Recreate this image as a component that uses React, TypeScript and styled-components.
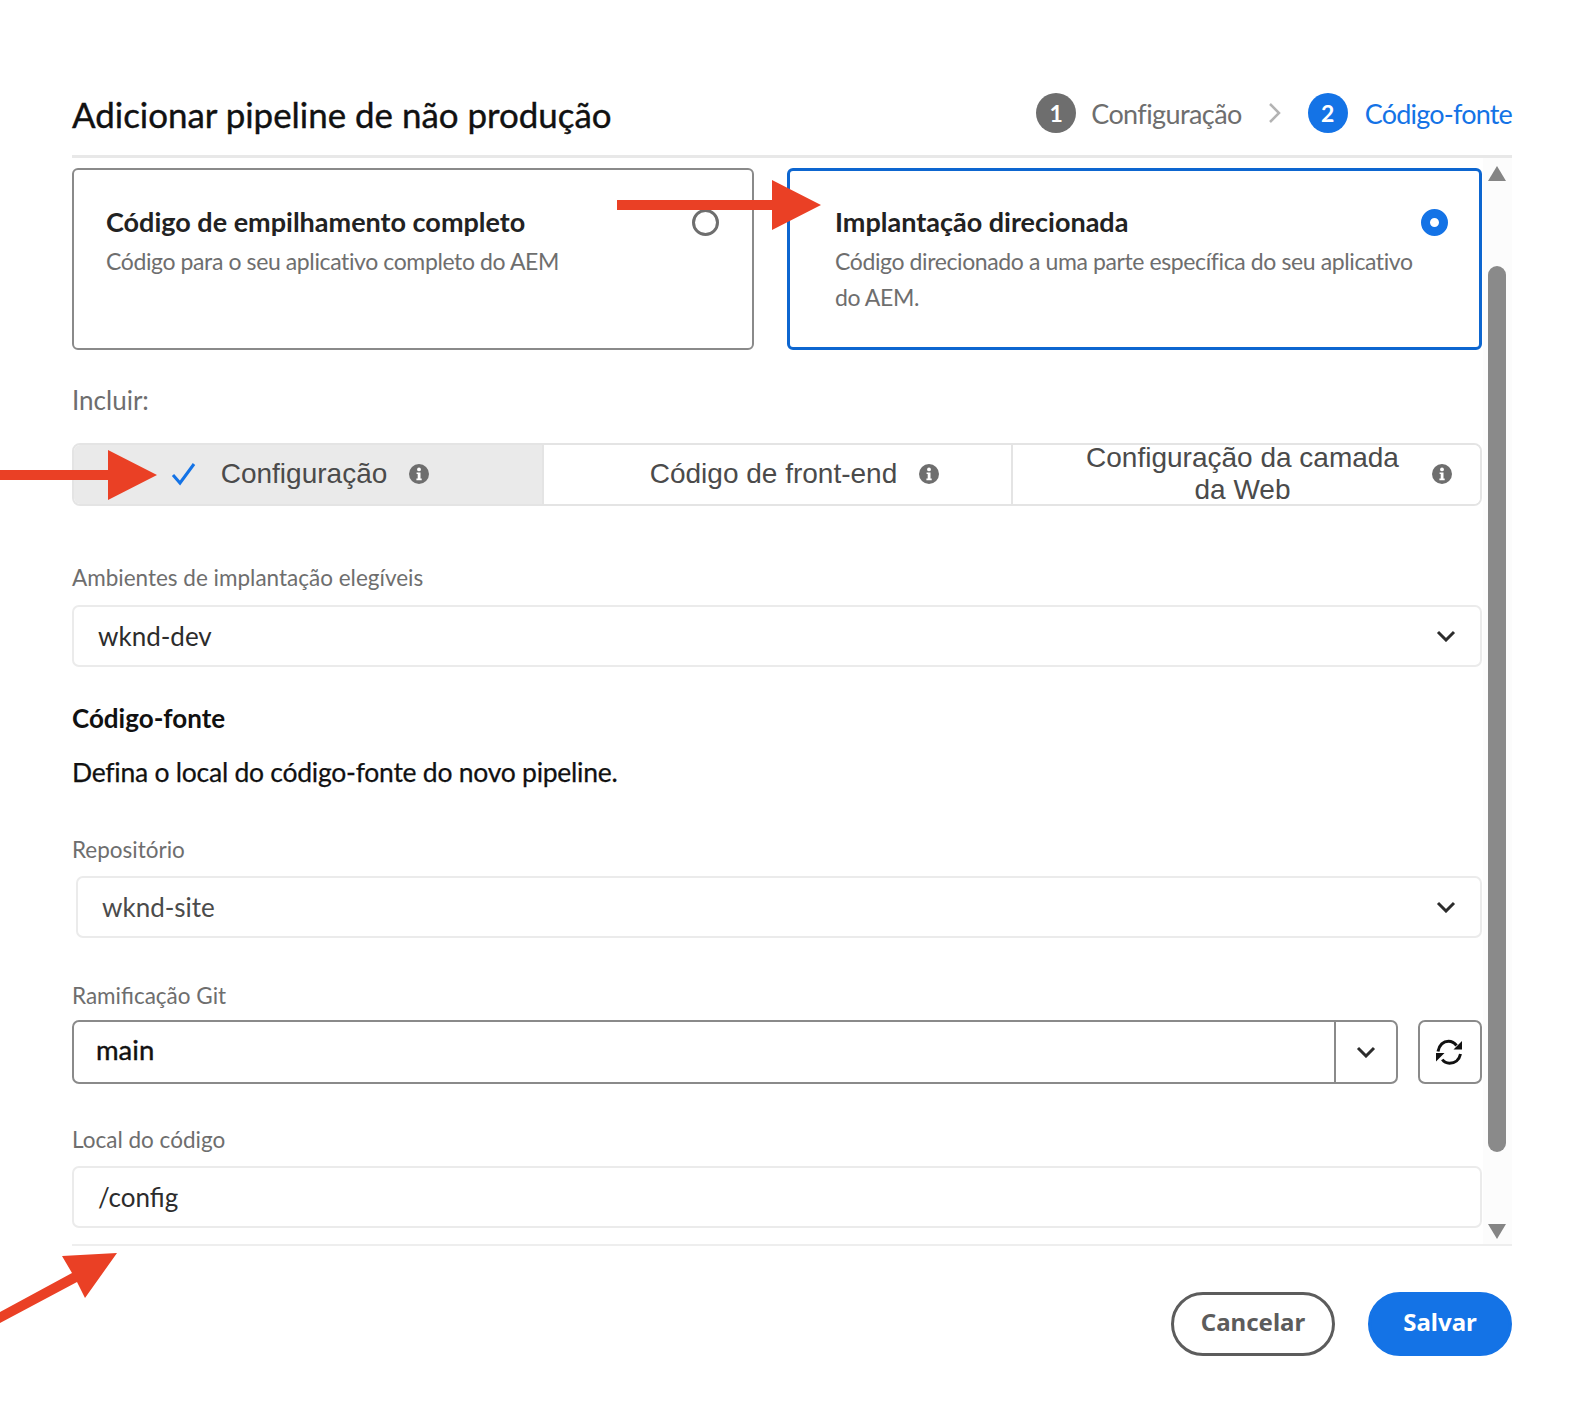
import styled, { createGlobalStyle } from "styled-components";

const GlobalStyle = createGlobalStyle`
  body {
    margin: 0;
    background: #fff;
    font-family: Lato, "Noto Sans", sans-serif;
  }
`;

const Page = styled.div`
  position: relative;
  width: 1588px;
  height: 1422px;
  padding: 0 76px 0 72px;
  box-sizing: border-box;
  overflow: hidden;
`;

const Header = styled.header`
  height: 62px;
  padding-top: 93px;
  display: flex;
  justify-content: space-between;
  align-items: flex-start;
  border-bottom: 3px solid #e8e8e8;
`;

const Title = styled.h1`
  margin: 0;
  height: 46px;
  line-height: 44px;
  font-size: 34.9px;
  font-weight: 400;
  -webkit-text-stroke: 0.4px #111;
  color: #111;
  white-space: nowrap;
`;

const Steps = styled.div`
  display: flex;
  align-items: center;
  height: 40px;
`;

const StepBadge = styled.span<{ $active?: boolean }>`
  width: 40px;
  height: 40px;
  border-radius: 50%;
  display: flex;
  align-items: center;
  justify-content: center;
  background: ${(p) => (p.$active ? "#1473e6" : "#6e6e6e")};
  color: #fff;
  font-size: 23px;
  font-weight: 700;
`;

const StepLabel = styled.span<{ $active?: boolean }>`
  margin-left: ${(p) => (p.$active ? "17px" : "15px")};
  font-size: 27px;
  letter-spacing: ${(p) => (p.$active ? "-0.8px" : "-0.6px")};
  color: ${(p) => (p.$active ? "#1473e6" : "#6e6e6e")};
  white-space: nowrap;
`;

const StepChevron = styled.svg`
  width: 14px;
  height: 24px;
  margin: 0 26px 0 26px;
  fill: none;
  stroke: #b3b3b3;
  stroke-width: 2.5;
`;

const ScrollRegion = styled.div`
  display: flex;
  height: 1088px;
  border-bottom: 2px solid #eee;
  padding-top: 10px;
  box-sizing: border-box;
  margin-bottom: 46px;
`;

const Content = styled.main`
  width: 1410px;
  flex: none;
`;

const ScrollTrack = styled.div`
  flex: 1;
  margin-left: 1px;
  margin-top: -10px;
  padding: 8px 6px 5px 5px;
  display: flex;
  flex-direction: column;
  background: #fcfcfc;
`;

const ScrollArrow = styled.svg`
  width: 18px;
  height: 15px;
  fill: #858585;
  flex: none;
`;

const ScrollRail = styled.div`
  flex: 1;
  padding: 85px 0 72px;
`;

const ScrollThumb = styled.div`
  height: 100%;
  background: #8a8a8a;
  border-radius: 9px;
`;

const Cards = styled.div`
  display: grid;
  grid-template-columns: 682px 695px;
  column-gap: 33px;
`;

const Card = styled.div<{ $selected?: boolean }>`
  height: 182px;
  box-sizing: border-box;
  border: ${(p) => (p.$selected ? "3px solid #0d66d0" : "2px solid #8a8a8a")};
  border-radius: 6px;
  padding: ${(p) => (p.$selected ? "34px 31px 0 45px" : "35px 33px 0 32px")};
  display: grid;
  grid-template-columns: 1fr 27px;
  column-gap: 10px;
  align-items: start;
  align-content: start;
`;

const CardTitle = styled.div`
  font-size: 27px;
  line-height: 34px;
  font-weight: 700;
  color: #222;
  white-space: nowrap;
`;

const CardText = styled.p`
  grid-column: 1 / 3;
  margin: 4px 0 0;
  padding-right: 25px;
  font-size: 23px;
  letter-spacing: -0.39px;
  line-height: 36px;
  color: #6e6e6e;
`;

const Radio = styled.span<{ $checked?: boolean }>`
  width: 27px;
  height: 27px;
  margin-top: 4px;
  box-sizing: border-box;
  border-radius: 50%;
  border: ${(p) => (p.$checked ? "9.5px solid #1473e6" : "3px solid #6e6e6e")};
  background: #fff;
`;

const FieldLabel = styled.label<{ $mt: number; $size?: number }>`
  display: block;
  height: 30px;
  line-height: 27px;
  margin-top: ${(p) => p.$mt}px;
  font-size: ${(p) => p.$size ?? 22.5}px;
  color: #6e6e6e;
  white-space: nowrap;
`;

const Segmented = styled.div`
  margin-top: 26px;
  height: 63px;
  box-sizing: border-box;
  border: 2px solid #e4e4e4;
  border-radius: 8px;
  display: grid;
  grid-template-columns: 468px 1fr 1fr;
  grid-template-rows: minmax(0, 1fr);
`;

const Segment = styled.div<{ $selected?: boolean; $pl: number; $pr: number }>`
  min-height: 0;
  box-sizing: border-box;
  display: flex;
  align-items: center;
  justify-content: center;
  gap: 22px;
  padding: 0 ${(p) => p.$pr}px 2px ${(p) => p.$pl}px;
  background: ${(p) => (p.$selected ? "#eaeaea" : "#fff")};
  border-radius: ${(p) => (p.$selected ? "6px 0 0 6px" : "0")};
  & + & {
    border-left: 2px solid #e4e4e4;
  }
  &:last-child {
    border-radius: 0 6px 6px 0;
  }
  font-family: "Liberation Sans", Arial, sans-serif;
  font-size: 28px;
  color: #4b4b4b;
`;

const SegmentText = styled.span`
  flex: 1;
  text-align: center;
  line-height: 32px;
`;

const SegmentLabel = styled.span`
  white-space: nowrap;
`;

const CheckIcon = styled.svg`
  width: 26px;
  height: 24px;
  fill: none;
  stroke: #1473e6;
  stroke-width: 3;
  margin-right: 2px;
`;

const InfoIcon = styled.svg`
  width: 20px;
  height: 20px;
  flex: none;
`;

const SelectBox = styled.div<{ $mt: number; $ml?: number; $color?: string }>`
  margin-top: ${(p) => p.$mt}px;
  margin-left: ${(p) => p.$ml ?? 0}px;
  height: 62px;
  box-sizing: border-box;
  border: 2px solid #ebebeb;
  border-radius: 7px;
  padding: 0 24px 1px;
  display: flex;
  align-items: center;
  justify-content: space-between;
  font-size: 26px;
  color: ${(p) => p.$color ?? "#2c2c2c"};
`;

const Chevron = styled.svg`
  width: 20px;
  height: 12px;
  fill: none;
  stroke: #2c2c2c;
  stroke-width: 3;
`;

const SectionTitle = styled.h2`
  margin: 37px 0 0;
  height: 30px;
  line-height: 28px;
  font-size: 26px;
  font-weight: 700;
  color: #111;
`;

const SectionText = styled.p`
  margin: 24px 0 0;
  height: 30px;
  line-height: 28px;
  font-size: 26.5px;
  letter-spacing: -0.25px;
  color: #111;
  -webkit-text-stroke: 0.25px #111;
`;

const BranchRow = styled.div`
  margin-top: 8px;
  height: 64px;
  display: flex;
  justify-content: space-between;
`;

const Combo = styled.div`
  width: 1326px;
  box-sizing: border-box;
  display: flex;
  border: 2px solid #8a8a8a;
  border-radius: 7px;
`;

const ComboInput = styled.div`
  flex: 1;
  padding: 0 0 6px 22px;
  display: flex;
  align-items: center;
  font-size: 27.5px;
  color: #111;
  -webkit-text-stroke: 0.4px #111;
`;

const ComboButton = styled.div`
  width: 60px;
  border-left: 2px solid #8a8a8a;
  display: flex;
  align-items: center;
  justify-content: center;
`;

const RefreshButton = styled.div`
  width: 64px;
  box-sizing: border-box;
  border: 2px solid #8a8a8a;
  border-radius: 7px;
  display: flex;
  align-items: center;
  justify-content: center;
  padding-right: 2px;
`;

const RefreshIcon = styled.svg`
  width: 26px;
  height: 26px;
`;

const Footer = styled.footer`
  display: flex;
  justify-content: flex-end;
  gap: 33px;
`;

const Button = styled.button<{ $primary?: boolean }>`
  height: 64px;
  width: ${(p) => (p.$primary ? "144px" : "164px")};
  box-sizing: border-box;
  border-radius: 32px;
  border: 3px solid ${(p) => (p.$primary ? "#1473e6" : "#5c5c5c")};
  background: ${(p) => (p.$primary ? "#1473e6" : "#fff")};
  color: ${(p) => (p.$primary ? "#fff" : "#5c5c5c")};
  font-family: "Noto Sans", sans-serif;
  font-size: 24px;
  font-weight: 700;
  padding: 0 0 5px;
`;

const ArrowOverlay = styled.svg`
  position: absolute;
  left: 0;
  top: 0;
  width: 1588px;
  height: 1422px;
  pointer-events: none;
  fill: #ea4025;
`;

const Info = () => (
  <InfoIcon viewBox="0 0 20 20">
    <circle cx="10" cy="10" r="10" fill="#6e6e6e" />
    <circle cx="10" cy="5.4" r="1.9" fill="#fff" />
    <path d="M7.6 8.4h3.9v6.2h1.2v1.6H7.4v-1.6h1.3v-4.6H7.6z" fill="#fff" />
  </InfoIcon>
);

const DownChevron = () => (
  <Chevron viewBox="0 0 20 12">
    <polyline points="2,2 10,10 18,2" />
  </Chevron>
);

export default function App() {
  return (
    <>
      <GlobalStyle />
      <Page>
        <Header>
          <Title>Adicionar pipeline de não produção</Title>
          <Steps>
            <StepBadge>1</StepBadge>
            <StepLabel>Configuração</StepLabel>
            <StepChevron viewBox="0 0 14 24">
              <polyline points="2,3 11,12 2,21" />
            </StepChevron>
            <StepBadge $active>2</StepBadge>
            <StepLabel $active>Código-fonte</StepLabel>
          </Steps>
        </Header>

        <ScrollRegion>
          <Content>
            <Cards>
              <Card>
                <CardTitle>Código de empilhamento completo</CardTitle>
                <Radio />
                <CardText>Código para o seu aplicativo completo do AEM</CardText>
              </Card>
              <Card $selected>
                <CardTitle>Implantação direcionada</CardTitle>
                <Radio $checked />
                <CardText>
                  Código direcionado a uma parte específica do seu aplicativo do AEM.
                </CardText>
              </Card>
            </Cards>

            <FieldLabel $mt={37} $size={26}>Incluir:</FieldLabel>
            <Segmented>
              <Segment $selected $pl={28} $pr={44}>
                <CheckIcon viewBox="0 0 26 24">
                  <polyline points="2,13 9,21 23,2" />
                </CheckIcon>
                <SegmentLabel>Configuração</SegmentLabel>
                <Info />
              </Segment>
              <Segment $pl={62} $pr={28}>
                <SegmentLabel>Código de front-end</SegmentLabel>
                <Info />
              </Segment>
              <Segment $pl={62} $pr={28}>
                <SegmentText>
                  Configuração da camada
                  <br />
                  da Web
                </SegmentText>
                <Info />
              </Segment>
            </Segmented>

            <FieldLabel $mt={58}>Ambientes de implantação elegíveis</FieldLabel>
            <SelectBox $mt={11}>
              wknd-dev
              <DownChevron />
            </SelectBox>

            <SectionTitle>Código-fonte</SectionTitle>
            <SectionText>Defina o local do código-fonte do novo pipeline.</SectionText>

            <FieldLabel $mt={48}>Repositório</FieldLabel>
            <SelectBox $mt={10} $ml={4} $color="#4b4b4b">
              wknd-site
              <DownChevron />
            </SelectBox>

            <FieldLabel $mt={44}>Ramificação Git</FieldLabel>
            <BranchRow>
              <Combo>
                <ComboInput>main</ComboInput>
                <ComboButton>
                  <DownChevron />
                </ComboButton>
              </Combo>
              <RefreshButton>
                <RefreshIcon viewBox="0 0 26 26">
                  <path d="M2 12.5C3 6 7.5 2.2 12.5 2.2c3.5 0 6 1.6 8 4.3" fill="none" stroke="#111" strokeWidth="3" />
                  <polygon points="26,2 26,10.5 17.5,10.5" fill="#111" />
                  <path d="M24.5 15c-1.2 5.8-5.6 9.2-11 9.2-3.2 0-5.6-1.4-7.2-3.7" fill="none" stroke="#111" strokeWidth="3" />
                  <polygon points="0,14 8.5,14 0,22.5" fill="#111" />
                </RefreshIcon>
              </RefreshButton>
            </BranchRow>

            <FieldLabel $mt={42}>Local do código</FieldLabel>
            <SelectBox $mt={10}>/config</SelectBox>
          </Content>

          <ScrollTrack>
            <ScrollArrow viewBox="0 0 18 15">
              <polygon points="9,0 18,15 0,15" />
            </ScrollArrow>
            <ScrollRail>
              <ScrollThumb />
            </ScrollRail>
            <ScrollArrow viewBox="0 0 18 15">
              <polygon points="0,0 18,0 9,15" />
            </ScrollArrow>
          </ScrollTrack>
        </ScrollRegion>

        <Footer>
          <Button>Cancelar</Button>
          <Button $primary>Salvar</Button>
        </Footer>

        <ArrowOverlay viewBox="0 0 1588 1422">
          <polygon points="617,200 772,200 772,180 821,205 772,230 772,210 617,210" />
          <polygon points="0,470 108,470 108,450 157,475 108,500 108,480 0,480" />
          <polygon points="117,1253 62,1256 72,1273 0,1312 0,1323 77,1282 85,1298" />
        </ArrowOverlay>
      </Page>
    </>
  );
}
